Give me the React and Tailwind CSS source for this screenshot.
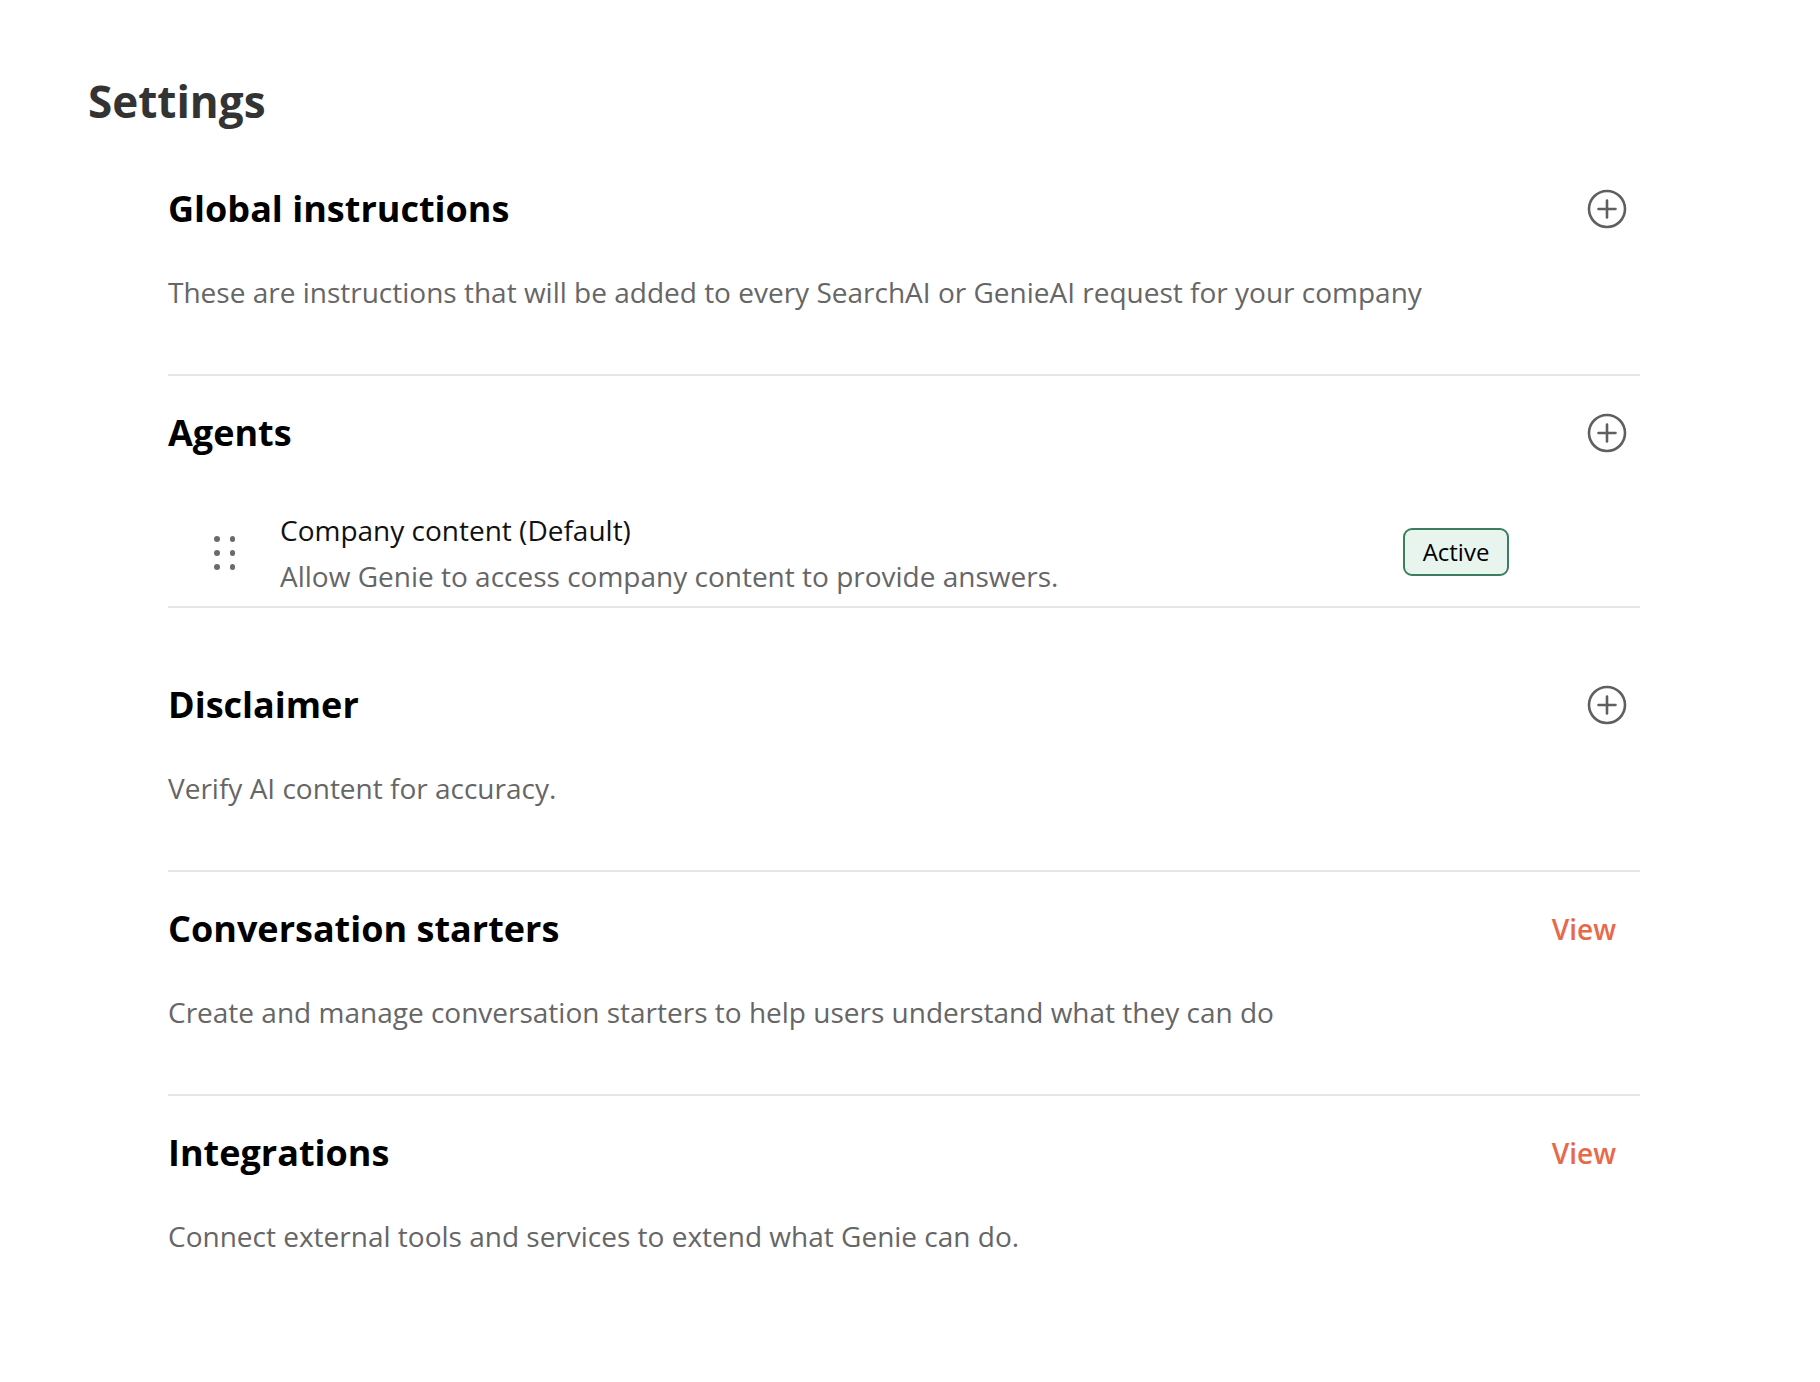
import { Fragment } from "react";

const font = { fontFamily: '"Open Sans", "Noto Sans", sans-serif' };

function PlusCircle() {
  return (
    <button type="button" className="mr-[13px] flex h-[40px] w-[40px] items-center justify-center text-[#5f5f5f]">
      <svg width="40" height="40" viewBox="0 0 40 40" fill="none" stroke="currentColor" strokeWidth="2.6" strokeLinecap="round">
        <circle cx="20" cy="20" r="18" />
        <path d="M20 11.5v17M11.5 20h17" />
      </svg>
    </button>
  );
}

function ViewLink() {
  return (
    <button type="button" className="mr-[24px] text-[28px] font-semibold leading-[40px] text-[#e8694a]">
      View
    </button>
  );
}

function DragHandle() {
  return (
    <div className="grid w-[22px] grid-cols-2 gap-x-[9px] gap-y-[8.5px]">
      {Array.from({ length: 6 }).map((_, i) => (
        <span key={i} className="h-[5.5px] w-[5.5px] rounded-full bg-[#6b6b6b]" />
      ))}
    </div>
  );
}

function SectionHeader({ title, action }) {
  return (
    <div className="flex h-[48px] items-center justify-between">
      <h2 className="text-[36px] font-bold leading-[48px] text-black">{title}</h2>
      {action === "add" ? <PlusCircle /> : <ViewLink />}
    </div>
  );
}

function Divider() {
  return <div className="h-[2px] w-full bg-[#e6e6e6]" />;
}

const sections = [
  {
    title: "Global instructions",
    action: "add",
    text: "These are instructions that will be added to every SearchAI or GenieAI request for your company",
  },
  { title: "Agents", action: "add", agents: true },
  { title: "Disclaimer", action: "add", text: "Verify AI content for accuracy.", top: "pt-[73px]" },
  {
    title: "Conversation starters",
    action: "view",
    text: "Create and manage conversation starters to help users understand what they can do",
  },
  {
    title: "Integrations",
    action: "view",
    text: "Connect external tools and services to extend what Genie can do.",
  },
];

export default function App() {
  return (
    <div className="min-h-[1382px] w-full bg-white pb-[40px]" style={font}>
      <h1 className="pl-[88px] pt-[71px] text-[44px] font-bold leading-[60px] text-[#333333]">Settings</h1>

      <div className="ml-[168px] w-[1472px] pt-[54px]">
        {sections.map((s, i) => (
          <Fragment key={s.title}>
            {i > 0 && <Divider />}
            <section className={i === 0 ? "" : s.top || "pt-[33px]"}>
              <SectionHeader title={s.title} action={s.action} />
              {s.agents ? (
                <div className="flex items-center pb-[10px] pt-[53px]">
                  <div className="ml-[46px] mr-[44px]">
                    <DragHandle />
                  </div>
                  <div className="flex-1">
                    <div className="text-[28px] leading-[40px] text-[#111111]">Company content (Default)</div>
                    <div className="mt-[6px] text-[28px] leading-[40px] text-[#666666]">
                      Allow Genie to access company content to provide answers.
                    </div>
                  </div>
                  <span className="mr-[131px] mt-[-3px] flex h-[48px] w-[106px] items-center justify-center rounded-[9px] border-2 border-[#3b7d5e] bg-[#e8f5ee] text-[24px] font-medium text-black">
                    Active
                  </span>
                </div>
              ) : (
                <p className="pb-[62px] pt-[39px] text-[28px] leading-[40px] text-[#666666]">{s.text}</p>
              )}
            </section>
          </Fragment>
        ))}
      </div>
    </div>
  );
}
